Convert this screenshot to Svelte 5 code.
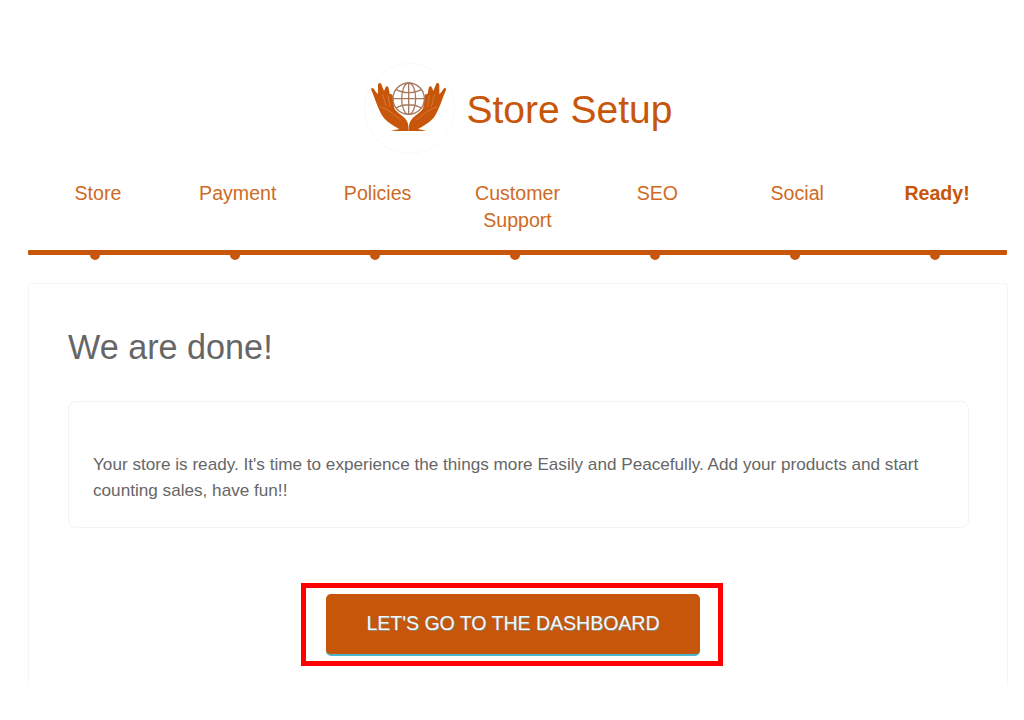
<script>
  const steps = ['Store', 'Payment', 'Policies', 'Customer Support', 'SEO', 'Social', 'Ready!'];
  const handPath = 'M33 96 C37 90 42 94 46 103 L54 112 L54 84 C56 76 62 76 65 84 L72 102 L76 92 C79 86 84 87 86 94 L89 110 L94 112 C98 112 99 118 99 124 L102 150 C105 162 116 168 126 176 C138 185 144 195 145 206 L146 222 L92 222 L118 216 C100 206 80 196 68 178 C55 158 46 128 33 96 Z';
</script>

<div class="page">
  <header class="brand">
    <div class="logo">
      <svg viewBox="12 18 273 273" width="91" height="91" aria-hidden="true">
        <path class="hand" d={handPath} />
        <path class="hand" d={handPath} transform="translate(292 0) scale(-1 1)" />
        <path class="crease" d="M60 150 C80 152 100 172 122 188 M84 116 L90 150 M68 112 L78 148" />
        <path class="crease" d="M232 150 C212 152 192 172 170 188 M208 116 L202 150 M224 112 L214 148" />
        <g class="globe">
          <circle cx="146" cy="125" r="47" />
          <ellipse cx="146" cy="125" rx="21" ry="47" />
          <path d="M146 78 V172 M99 125 H193 M108 97 C130 110 162 110 184 97 M108 153 C130 140 162 140 184 153" />
        </g>
      </svg>
    </div>
    <h1>Store Setup</h1>
  </header>

  <nav class="steps">
    {#each steps as step, i}
      <div class="step" class:current={i === steps.length - 1}>{step}</div>
    {/each}
  </nav>
  <div class="rail">
    {#each steps as step}
      <span class="tick"><i></i></span>
    {/each}
  </div>

  <main class="card">
    <h2>We are done!</h2>
    <div class="note">
      <p>Your store is ready. It's time to experience the things more Easily and Peacefully. Add your products and start counting sales, have fun!!</p>
    </div>
    <div class="action">
      <div class="highlight">
        <button type="button">LET'S GO TO THE DASHBOARD</button>
      </div>
    </div>
  </main>
</div>

<style>
  :global(body) {
    margin: 0;
    background: #fff;
  }

  .page {
    box-sizing: border-box;
    width: 1024px;
    height: 720px;
    padding: 63px 16px 0 28px;
    font-family: "Liberation Sans", Arial, sans-serif;
    color: #c7560a;
    overflow: hidden;
  }

  .brand {
    display: flex;
    align-items: center;
    justify-content: center;
    gap: 12px;
    height: 91px;
  }

  .logo {
    box-sizing: border-box;
    width: 91px;
    height: 91px;
    flex: none;
    border-radius: 50%;
    border: 1px solid #f9f9f9;
    display: flex;
    align-items: center;
    justify-content: center;
  }

  .logo svg {
    display: block;
    flex: none;
  }

  .hand {
    fill: #c7560a;
  }

  .crease {
    fill: none;
    stroke: #e29a66;
    stroke-width: 1.5;
  }

  .globe {
    fill: none;
    stroke: #a67a5e;
    stroke-width: 4;
  }

  h1 {
    margin: 0;
    padding-top: 2px;
    font-size: 39px;
    font-weight: 400;
    line-height: 46px;
  }

  .steps {
    display: grid;
    grid-template-columns: repeat(7, 1fr);
    height: 70px;
    padding-top: 26px;
    width: 979px;
  }

  .step {
    box-sizing: border-box;
    padding: 0 20px;
    text-align: center;
    font-size: 19.6px;
    line-height: 27px;
    color: #cf6a24;
  }

  .step.current {
    font-weight: 700;
    color: #c7560a;
  }

  .rail {
    display: grid;
    grid-template-columns: repeat(7, 1fr);
    width: 979px;
    height: 5px;
    background: #c7560a;
    border-radius: 1px;
  }

  .tick {
    display: flex;
    justify-content: center;
    padding-right: 5px;
  }

  .tick i {
    display: block;
    width: 10px;
    height: 10px;
    border-radius: 50%;
    background: #c7560a;
  }

  .card {
    box-sizing: border-box;
    width: 980px;
    height: 403px;
    margin-top: 28px;
    padding: 41px 39px 0 39px;
    border: 1px solid #f6f6f6;
    border-bottom: 0;
    border-radius: 4px 4px 0 0;
    background: #fff;
  }

  h2 {
    margin: 0;
    font-size: 34.2px;
    font-weight: 400;
    line-height: 44px;
    color: #666;
  }

  .note {
    box-sizing: border-box;
    width: 901px;
    height: 127px;
    margin-top: 32px;
    padding: 49px 24px 0;
    border: 1px solid #f3f3f3;
    border-radius: 8px;
  }

  .note p {
    margin: 0;
    font-size: 17.15px;
    line-height: 26px;
    color: #666;
  }

  .action {
    display: flex;
    justify-content: center;
    margin-top: 55px;
    padding-right: 12px;
  }

  .highlight {
    box-sizing: border-box;
    width: 422px;
    height: 83px;
    padding: 6px 18px 6px 20px;
    border: 5px solid #f00;
  }

  button {
    display: block;
    box-sizing: border-box;
    width: 374px;
    height: 62px;
    padding: 0 0 2px;
    border: 0;
    border-bottom: 2px solid #4cb5c9;
    border-radius: 5px;
    background: #c7560a;
    color: #f2f8ff;
    font-family: inherit;
    font-size: 19.5px;
    text-shadow: 1px 1px 0 rgba(90, 190, 220, 0.55);
  }
</style>
